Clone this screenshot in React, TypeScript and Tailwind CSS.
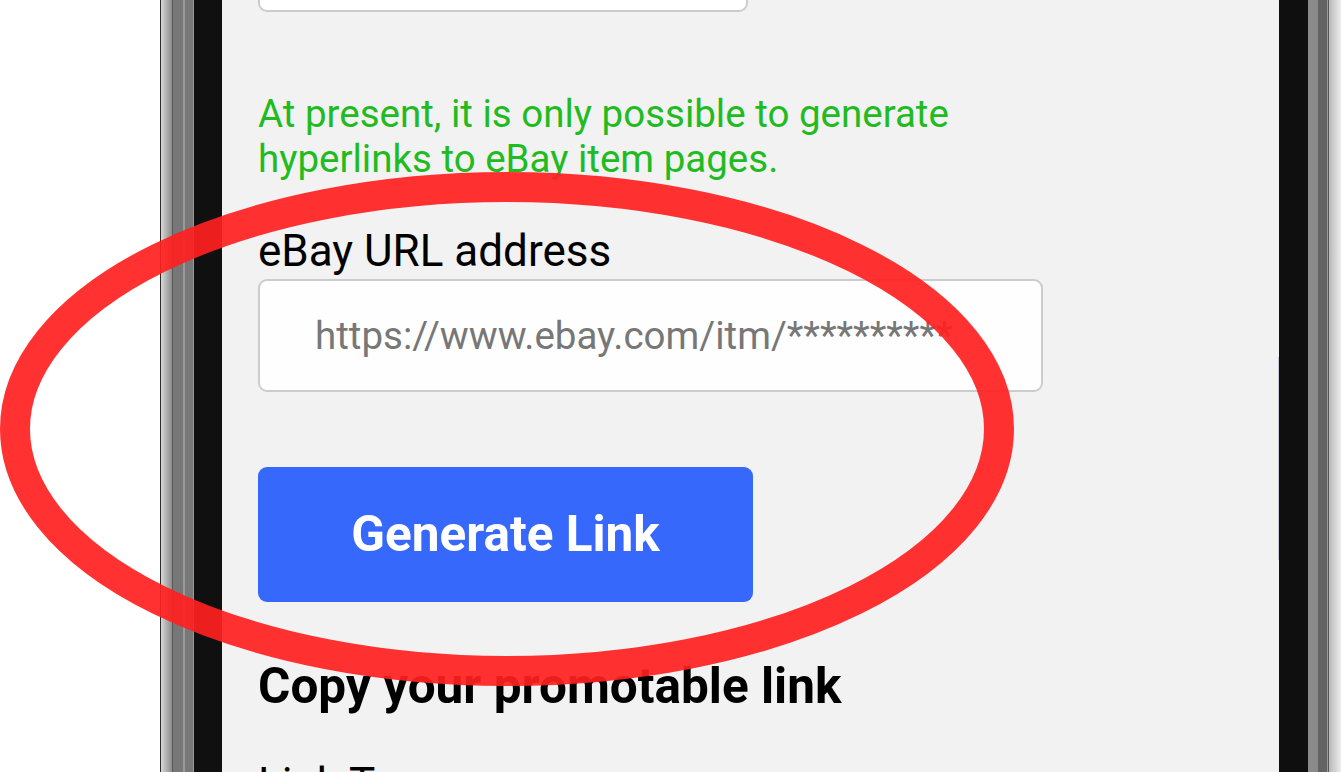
import React from "react";

export default function App() {
  return (
    <div className="relative w-[1341px] h-[772px] overflow-hidden bg-white font-[Roboto,sans-serif]">
      <div className="flex h-full">
        {/* outside white */}
        <div className="w-[160px] shrink-0 bg-white" />
        {/* left bezel */}
        <div className="w-px shrink-0 bg-[#2a2a2a]" />
        <div className="w-[11px] shrink-0 bg-gradient-to-r from-[#d8d8d8] to-[#8c8c8c]" />
        <div className="w-px shrink-0 bg-[#5a5a5a]" />
        <div className="w-[10px] shrink-0 bg-[#777777]" />
        <div className="w-[2px] shrink-0 bg-[#9a9a9a]" />
        <div className="w-[8px] shrink-0 bg-[#787878]" />
        <div className="w-px shrink-0 bg-[#999999]" />
        <div className="w-[28px] shrink-0 bg-[#101010]" />
        {/* screen */}
        <div className="relative flex-1 bg-[#f2f2f2] pl-[36px]">
          <div className="flex flex-col">
            <div className="h-[12px] w-[490px] rounded-b-[9px] border-x-2 border-b-2 border-[#cccccc] bg-white" />
            <p className="mt-[79px] text-[38.5px] leading-[45px] text-[#1fbb1f]">
              At present, it is only possible to generate
              <br />
              hyperlinks to eBay item pages.
            </p>
            <label className="mt-[44px] text-[44px] leading-[52px] text-black">eBay URL address</label>
            <input
              readOnly
              placeholder="https://www.ebay.com/itm/**********"
              className="mt-[2px] h-[113px] w-[785px] rounded-[9px] border-2 border-[#cccccc] bg-[#fefefe] pl-[55px] text-[38.5px] outline-none placeholder:text-[#777777]"
            />
            <button className="mt-[75px] flex h-[135px] w-[495px] items-center justify-center rounded-[9px] bg-[#3668fc] text-[49.5px] font-bold text-white">
              Generate Link
            </button>
            <h2 className="mt-[56px] text-[49.5px] leading-[56px] font-bold text-black">Copy your promotable link</h2>
            <p className="mt-[44px] text-[44px] leading-[52px] text-black">Link Type</p>
          </div>
          <div className="absolute right-0 top-[357px] h-[203px] w-px bg-[#c8c8d4]" />
        </div>
        {/* right bezel */}
        <div className="w-[29px] shrink-0 bg-[#0f0f0f]" />
        <div className="w-[10px] shrink-0 bg-[#8a8a8a]" />
        <div className="w-[9px] shrink-0 bg-[#636363]" />
        <div className="w-px shrink-0 bg-[#9a9a9a]" />
        <div className="w-px shrink-0 bg-[#555555]" />
        <div className="w-[12px] shrink-0 bg-gradient-to-r from-[#b8b8b8] to-[#eeeeee]" />
      </div>
      <svg className="pointer-events-none absolute inset-0" width="1341" height="772" viewBox="0 0 1341 772">
        <ellipse cx="507" cy="429" rx="492" ry="242" fill="none" stroke="#ff2020" strokeOpacity="0.92" strokeWidth="30" />
      </svg>
    </div>
  );
}
